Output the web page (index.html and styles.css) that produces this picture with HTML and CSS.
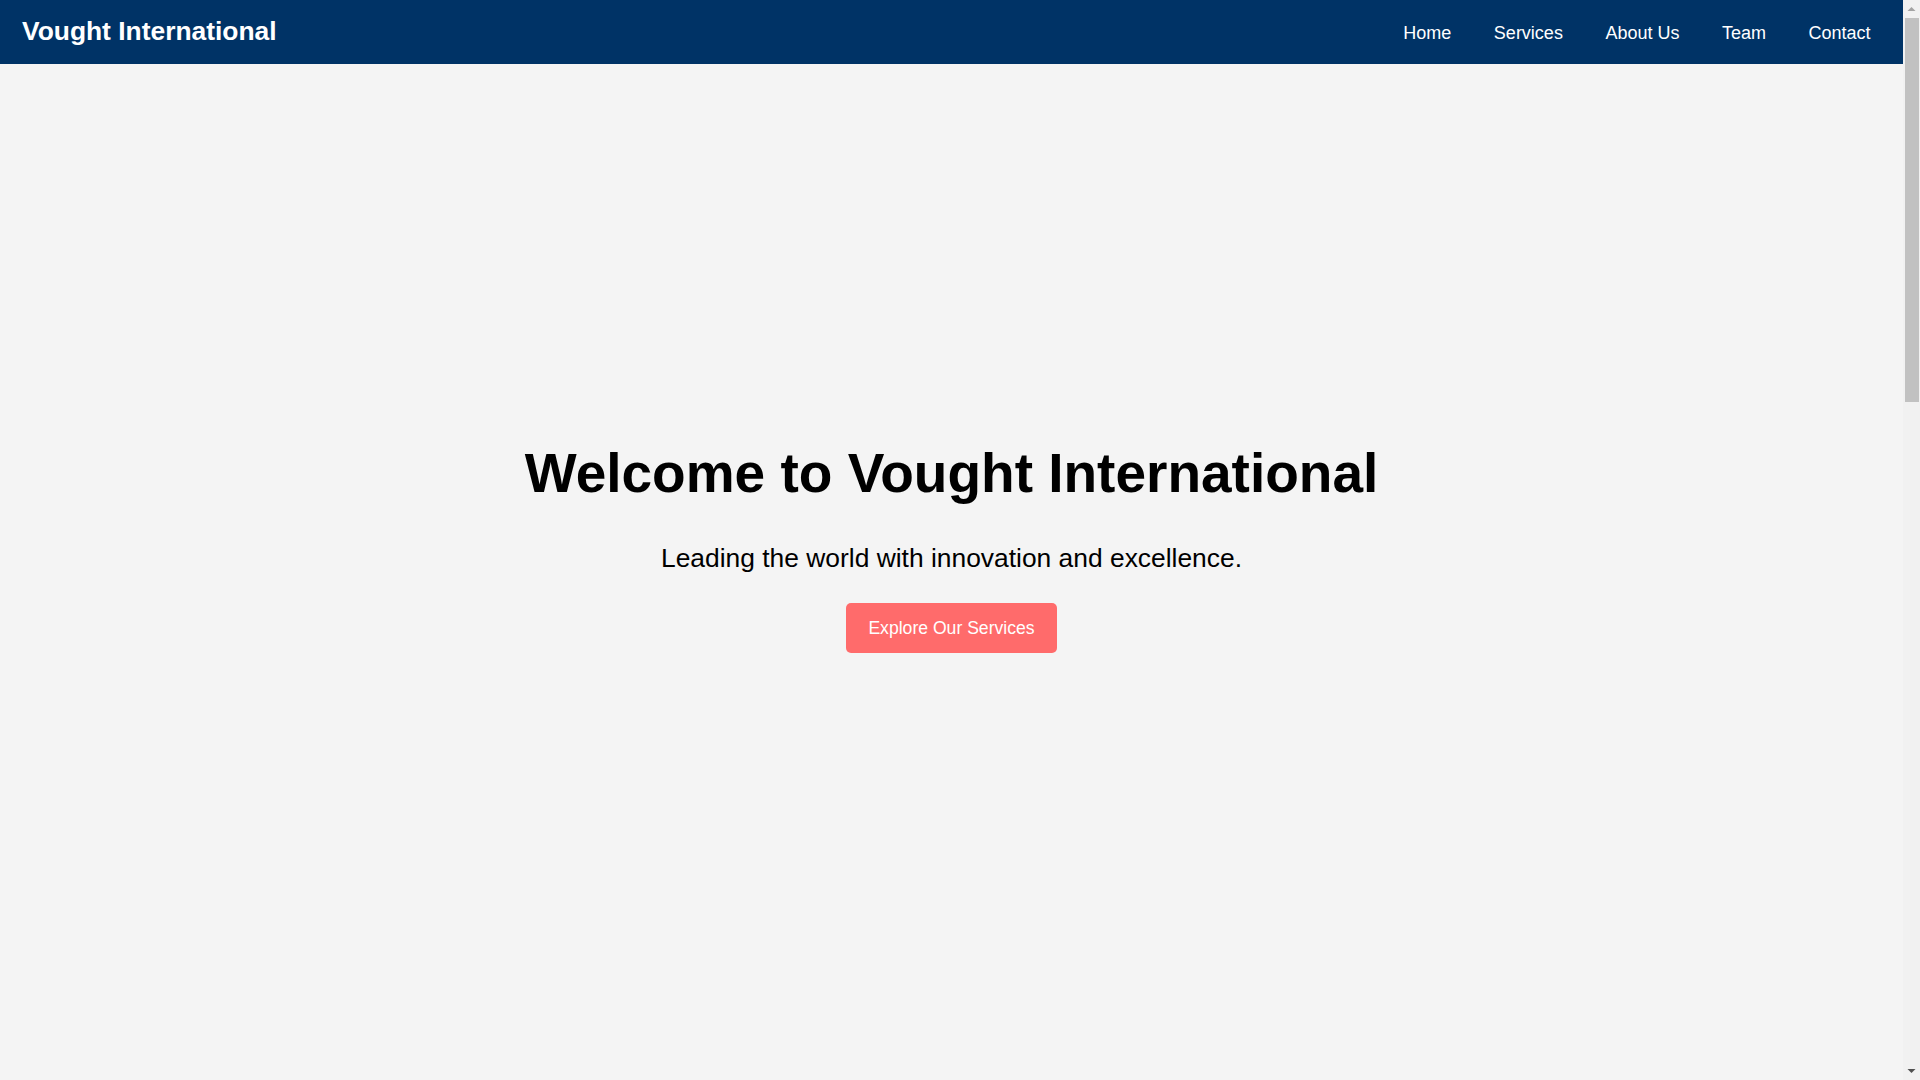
FILE: index.html
```html
<!DOCTYPE html>
<html lang="en">
<head>
<meta charset="utf-8">
<title>Vought International</title>
<link rel="stylesheet" href="styles.css">
</head>
<body>
<header class="site-header">
  <div class="logo">Vought International</div>
  <nav class="main-nav">
    <a href="#home">Home</a>
    <a href="#services">Services</a>
    <a href="#about">About Us</a>
    <a href="#team">Team</a>
    <a href="#contact">Contact</a>
  </nav>
</header>
<main class="page">
  <section class="hero" id="home">
    <h1 class="hero-title">Welcome to Vought International</h1>
    <p class="hero-sub">Leading the world with innovation and excellence.</p>
    <a class="hero-btn" href="#services">Explore Our Services</a>
  </section>
</main>
<div class="scrollbar" aria-hidden="true">
  <div class="sb-btn">
    <svg width="9" height="5" viewBox="0 0 9 5"><polygon points="0.5,5 8.5,5 4.5,1" fill="#a3a3a3"/></svg>
  </div>
  <div class="sb-track">
    <div class="sb-thumb"></div>
  </div>
  <div class="sb-btn">
    <svg width="9" height="5" viewBox="0 0 9 5"><polygon points="0.5,0 8.5,0 4.5,4" fill="#505050"/></svg>
  </div>
</div>
</body>
</html>
```

FILE: styles.css
```css
html, body {
  margin: 0;
  padding: 0;
}

body {
  background: #f4f4f4;
  color: #000;
  font-family: "Liberation Sans", Arial, sans-serif;
  margin-right: 17px;
}

.site-header {
  height: 64px;
  background: #003366;
  color: #fff;
  display: flex;
  align-items: center;
  justify-content: space-between;
  padding: 0 32.5px 0 22px;
  box-sizing: border-box;
}

.logo {
  font-size: 26.4px;
  font-weight: bold;
  line-height: 1.2;
}

.main-nav {
  display: flex;
  gap: 42.5px;
  padding-top: 3px;
}

.main-nav a {
  color: #fff;
  text-decoration: none;
  font-size: 18px;
  line-height: 1.2;
}

.page {
  min-height: 2886px;
}

.hero {
  display: flex;
  flex-direction: column;
  align-items: center;
  text-align: center;
  padding-top: 376px;
  height: 1016px;
  box-sizing: border-box;
}

.hero-title {
  margin: 0;
  font-size: 55px;
  line-height: 66px;
  font-weight: bold;
}

.hero-sub {
  margin: 37px 0 0;
  font-size: 26.4px;
  line-height: 31.7px;
}

.hero-btn {
  margin-top: 28.6px;
  display: inline-block;
  background: #ff6b6b;
  color: #fff;
  text-decoration: none;
  font-size: 17.6px;
  line-height: 21px;
  padding: 14.5px 22.3px;
  border-radius: 5px;
}

/* simulated browser scrollbar */
.scrollbar {
  position: fixed;
  top: 0;
  right: 0;
  width: 17px;
  height: 100vh;
  background: #f1f1f1;
  display: flex;
  flex-direction: column;
}

.sb-btn {
  height: 17px;
  flex: 0 0 17px;
  display: flex;
  align-items: center;
  justify-content: center;
}

.sb-btn svg {
  display: block;
}

.sb-track {
  flex: 1;
  padding: 1px 1px 0 2px;
}

.sb-thumb {
  height: 384px;
  background: #c1c1c1;
}
```
